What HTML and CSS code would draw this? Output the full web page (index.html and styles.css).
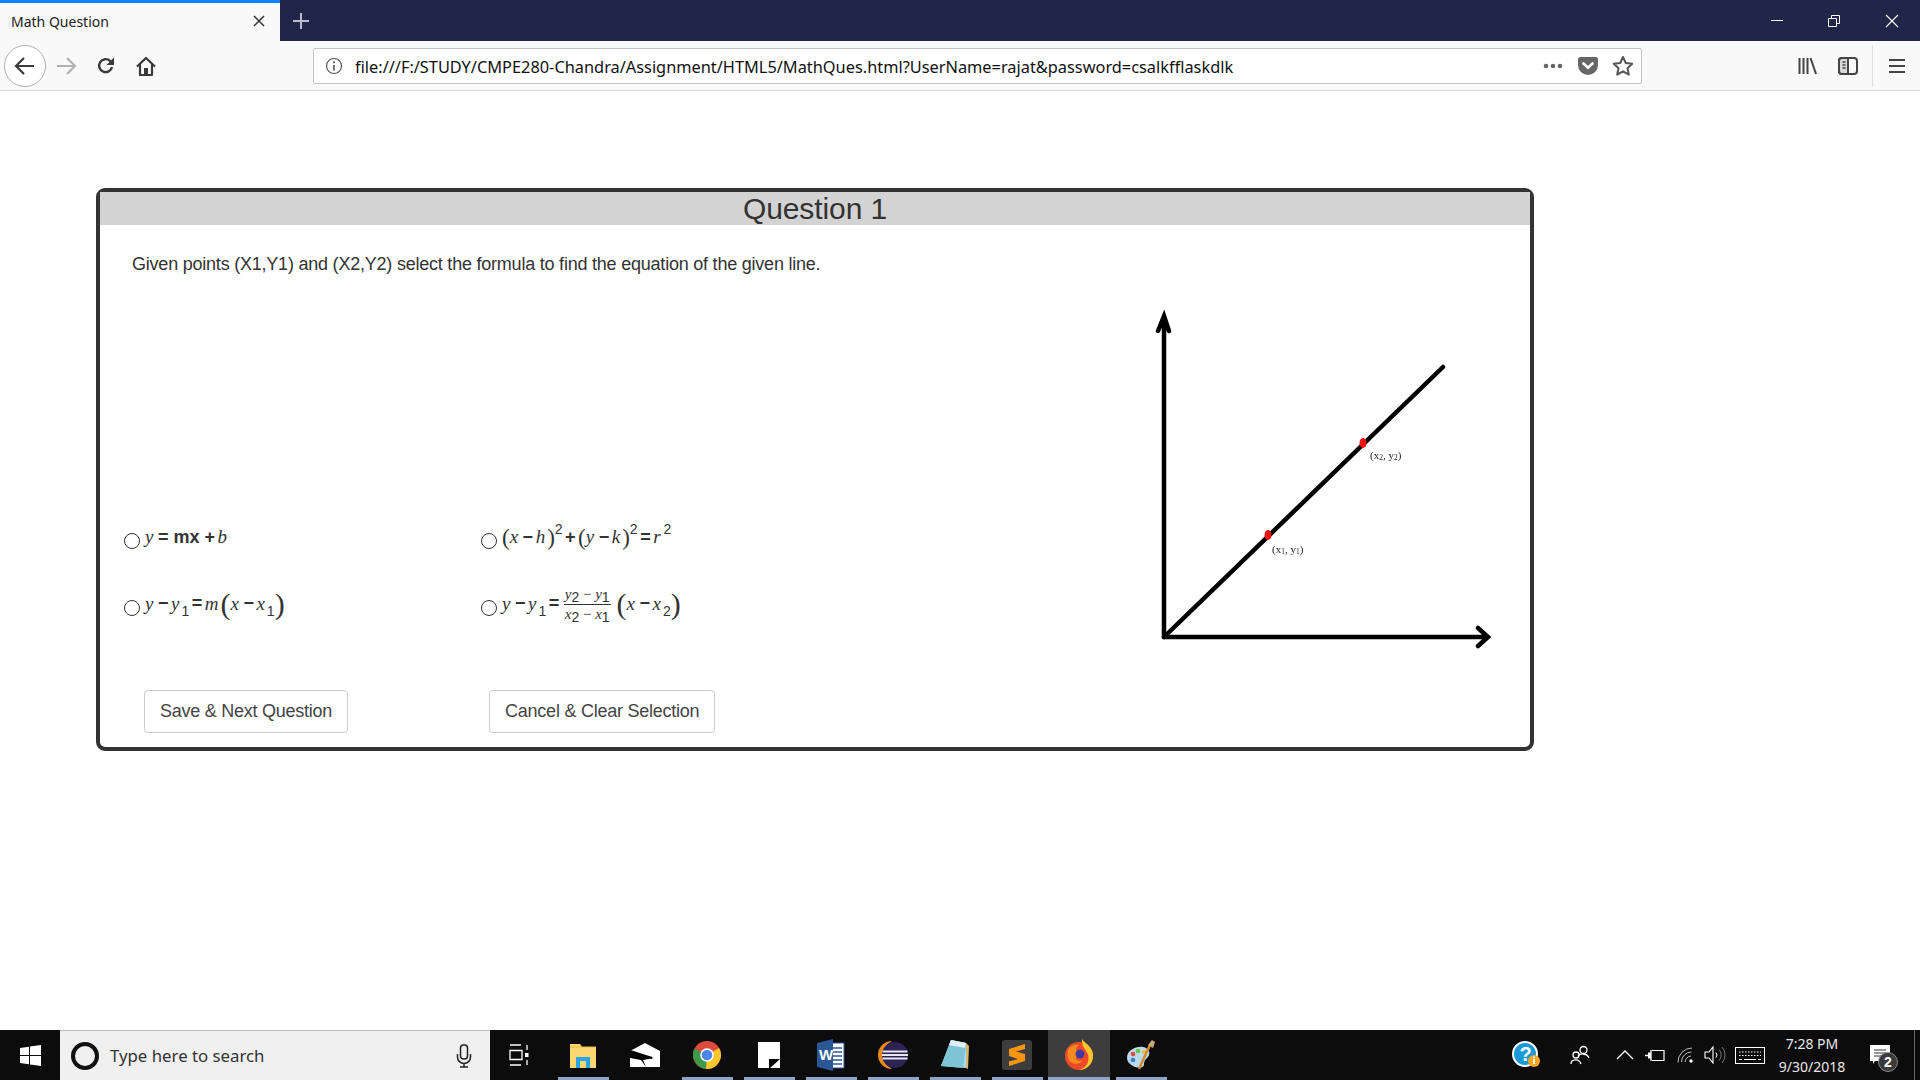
FILE: index.html
```html
<!DOCTYPE html>
<html>
<head>
  <title>Math Question</title>
  <link rel="stylesheet" href="styles.css">
</head>
<body>
  <!-- browser chrome -->
  <div class="tabbar">
    <div class="tab">
      <span class="tab-title">Math Question</span>
      <svg class="tab-close" width="14" height="14" viewBox="0 0 14 14"><path d="M2 2l10 10M12 2L2 12" stroke="#333" stroke-width="1.5"/></svg>
    </div>
    <svg class="new-tab" width="18" height="18" viewBox="0 0 18 18"><path d="M9 1v16M1 9h16" stroke="#b9bcc9" stroke-width="2"/></svg>
    <div class="win-btns">
      <svg class="win-btn" width="14" height="14" viewBox="0 0 14 14"><path d="M1 6.500h12" stroke="#fff"/></svg>
      <svg class="win-btn" width="14" height="14" viewBox="0 0 14 14"><path d="M1.500 4.500h8v8h-8zM4.500 4.500v-3h8v8h-3" fill="none" stroke="#fff"/></svg>
      <svg class="win-btn" width="16" height="16" viewBox="0 0 16 16"><path d="M2 2l12 12M14 2L2 14" stroke="#fff" stroke-width="1.100"/></svg>
    </div>
  </div>

  <div class="toolbar">
    <div class="back-btn">
      <svg width="22" height="20" viewBox="0 0 22 20"><path d="M20 10H3M10 2l-8 8 8 8" fill="none" stroke="#3a3a3a" stroke-width="2.200"/></svg>
    </div>
    <svg class="nav-icon forward" width="22" height="20" viewBox="0 0 22 20"><path d="M20 10H3M10 2l-8 8 8 8" transform="matrix(-1 0 0 1 22 0)" fill="none" stroke="#b1b1b1" stroke-width="2.200"/></svg>
    <svg class="nav-icon" width="20" height="20" viewBox="0 0 20 20"><path d="M16 11a6.500 6.500 0 1 1-2-6.200L16 7" fill="none" stroke="#3a3a3a" stroke-width="2.400"/><path d="M18 1.500V9h-7.500z" fill="#3a3a3a"/></svg>
    <svg class="nav-icon" width="22" height="22" viewBox="0 0 22 22"><path d="M2 11.500L11 3l9 8.500M5 9.500V20h12V9.500" fill="none" stroke="#3a3a3a" stroke-width="2.200" stroke-linejoin="round"/><rect x="9" y="13" width="4" height="7" fill="#3a3a3a"/></svg>

    <div class="urlbar">
      <svg class="info" width="18" height="18" viewBox="0 0 18 18"><circle cx="9" cy="9" r="7.500" fill="none" stroke="#555" stroke-width="1.200"/><path d="M9 8v5.500" stroke="#555" stroke-width="1.600"/><circle cx="9" cy="5.300" r="1.100" fill="#555"/></svg>
      <span class="url">file:///F:/STUDY/CMPE280-Chandra/Assignment/HTML5/MathQues.html?UserName=rajat&amp;password=csalkfflaskdlk</span>
      <svg class="url-icon dots" width="20" height="6" viewBox="0 0 20 6"><circle cx="3" cy="3" r="2.300" fill="#666"/><circle cx="10" cy="3" r="2.300" fill="#666"/><circle cx="17" cy="3" r="2.300" fill="#666"/></svg>
      <svg class="url-icon pocket" width="20" height="18" viewBox="0 0 20 18"><path d="M2.500 0h15A2.500 2.500 0 0 1 20 2.500V8A10 10 0 0 1 0 8V2.500A2.500 2.500 0 0 1 2.500 0z" fill="#666"/><path d="M5.500 6.500L10 10.800l4.500-4.300" fill="none" stroke="#fff" stroke-width="2.600" stroke-linecap="round"/></svg>
      <svg class="url-icon star" width="22" height="21" viewBox="0 0 22 21"><path d="M11 2l2.800 6 6.400.8-4.700 4.400 1.300 6.400L11 16.400l-5.800 3.200 1.300-6.400L1.800 8.800 8.200 8z" fill="none" stroke="#555" stroke-width="2" stroke-linejoin="round"/></svg>
    </div>

    <div class="tools">
      <svg class="tool" width="20" height="18" viewBox="0 0 20 18"><path d="M1.500 1v16M5.500 1v16M9.500 1v16M12.500 1l5.500 16" stroke="#444" stroke-width="2"/></svg>
      <svg class="tool" width="20" height="18" viewBox="0 0 20 18"><rect x="1" y="1" width="18" height="16" rx="3" fill="none" stroke="#444" stroke-width="2"/><path d="M10 1h-6a3 3 0 0 0-3 3v10a3 3 0 0 0 3 3h6z" fill="#d8d8d8" stroke="#444" stroke-width="2"/><path d="M4.500 5h3M4.500 8h3M4.500 11h3" stroke="#444" stroke-width="1.300"/></svg>
      <div class="tool-sep"></div>
      <svg class="tool" width="16" height="16" viewBox="0 0 16 16"><path d="M0 2h16M0 8h16M0 14h16" stroke="#444" stroke-width="2"/></svg>
    </div>
  </div>

  <!-- page -->
  <div class="page">
    <form class="card" onsubmit="return false">
      <h2 class="card-title">Question 1</h2>
      <div class="card-body">
        <div class="card-left">
          <p class="prompt">Given points (X1,Y1) and (X2,Y2) select the formula to find the equation of the given line.</p>

          <div class="options">
            <label class="option">
              <input type="radio" name="formula" class="radio">
              <span class="math"><i>y</i> <b>=</b> <b>mx</b> <b>+</b> <i>b</i></span>
            </label>
            <label class="option">
              <input type="radio" name="formula" class="radio">
              <span class="math"><span class="par">(</span><i>x</i> <b>&minus;</b> <i>h</i><span class="par">)</span><sup>2</sup> <b>+</b> <span class="par">(</span><i>y</i> <b>&minus;</b> <i>k</i><span class="par">)</span><sup>2</sup> <b>=</b> <i>r</i><sup class="sup-r">2</sup></span>
            </label>
            <label class="option">
              <input type="radio" name="formula" class="radio">
              <span class="math math-tall"><i>y</i> <b>&minus;</b> <i>y</i><sub>1</sub> <b>=</b> <i>m</i><span class="big">(</span><i>x</i> <b>&minus;</b> <i>x</i><sub>1</sub><span class="big">)</span></span>
            </label>
            <label class="option">
              <input type="radio" name="formula" class="radio">
              <span class="math math-tall"><i>y</i> <b>&minus;</b> <i>y</i><sub>1</sub> <b>=</b>
                <span class="frac">
                  <span class="frac-top"><i>y</i><sub>2</sub> &minus; <i>y</i><sub>1</sub></span>
                  <span class="frac-bot"><i>x</i><sub>2</sub> &minus; <i>x</i><sub>1</sub></span>
                </span>
                <span class="big big-gap">(</span><i>x</i> <b>&minus;</b> <i>x</i><sub>2</sub><span class="big">)</span></span>
            </label>
          </div>

          <div class="actions">
            <button type="button" class="btn">Save &amp; Next Question</button>
            <button type="button" class="btn">Cancel &amp; Clear Selection</button>
          </div>
        </div>

        <svg class="graph" width="360" height="350" viewBox="1150 300 360 350">
          <g fill="none" stroke="#000" stroke-width="4.500" stroke-linecap="round">
            <path d="M1163 637V318M1157 331l6-15 5 15"/>
            <path d="M1163 637H1484M1477 628l10 9-10 9"/>
            <path d="M1163 637L1442 367"/>
          </g>
          <ellipse cx="1267" cy="535" rx="3.500" ry="5" fill="#f01010"/>
          <ellipse cx="1362" cy="443" rx="3.500" ry="5" fill="#f01010"/>
          <text x="1271" y="553" class="graph-label">(x<tspan class="graph-sub" dy="1">1</tspan><tspan dy="-1">, y</tspan><tspan class="graph-sub" dy="1">1</tspan><tspan dy="-1">)</tspan></text>
          <text x="1369" y="459" class="graph-label">(x<tspan class="graph-sub" dy="1">2</tspan><tspan dy="-1">, y</tspan><tspan class="graph-sub" dy="1">2</tspan><tspan dy="-1">)</tspan></text>
        </svg>
      </div>
    </form>
  </div>

  <!-- windows taskbar -->
  <div class="taskbar">
    <div class="start">
      <svg width="21" height="21" viewBox="0 0 21 21"><path d="M0 3l9-1.300V10H0zM10 1.500L21 0v10H10zM0 11h9v8.300L0 18zM10 11h11v10l-11-1.500z" fill="#fff"/></svg>
    </div>
    <div class="search">
      <span class="cortana"></span>
      <span class="search-text">Type here to search</span>
      <svg class="mic" width="16" height="24" viewBox="0 0 16 24"><rect x="4.500" y="1" width="7" height="14" rx="3" fill="none" stroke="#222" stroke-width="1.500"/><path d="M1.500 10v3a6.500 6.500 0 0 0 13 0v-3M8 19.500V23M4 23h8" fill="none" stroke="#222" stroke-width="1.500"/></svg>
    </div>
    <div class="taskview">
      <svg width="20" height="22" viewBox="0 0 20 22"><path d="M1 1h11M1 21h11M1 6.500h12v9H1zM18 1v5M18 16v5" fill="none" stroke="#fff" stroke-width="1.300"/><rect x="16" y="9" width="3.500" height="4" fill="#fff"/></svg>
    </div>

    <div class="apps">
      <div class="app running">
        <svg width="28" height="28" viewBox="0 0 28 28"><path d="M1 3h10l2 3h14v21H1z" fill="#fbd774"/><path d="M1 6h26" stroke="#e8b93f"/><path d="M7 27v-11h14v11h-4v-7h-6v7z" fill="#2ba3e4"/></svg>
      </div>
      <div class="app">
        <svg width="32" height="24" viewBox="0 0 32 24"><path d="M1 8L16 0l15 8v16H1z" fill="#fff"/><path d="M1 8l24 7-11 2 3 7-5-7-11-2z" fill="#000"/><path d="M1 8l22 7" stroke="#000" stroke-width="2"/></svg>
      </div>
      <div class="app running">
        <svg width="28" height="28" viewBox="0 0 28 28"><circle cx="14" cy="14" r="14" fill="#dd4b3e"/><path d="M14 14L2 21A14 14 0 0 0 14 28z" fill="#3c9b4a"/><path d="M2 21A14 14 0 0 1 1.500 7.500L14 14z" fill="#3c9b4a"/><path d="M14 14l12-7A14 14 0 0 1 13 28z" fill="#fbc52d"/><circle cx="14" cy="14" r="6.800" fill="#fff"/><circle cx="14" cy="14" r="5.300" fill="#4b87e8"/></svg>
      </div>
      <div class="app running">
        <svg width="24" height="28" viewBox="0 0 24 28"><path d="M1 1h22v18h-9v8H1z" fill="#fff"/><path d="M12 27l11-11v11z" fill="#fff"/><path d="M12 28l0-10 11 0z" fill="#000"/></svg>
      </div>
      <div class="app running">
        <svg width="28" height="32" viewBox="0 0 28 32"><path d="M13 4h14v25H13z" fill="#fff" stroke="#2b5797"/><path d="M15 9h10M15 13h10M15 17h10M15 21h10M15 25h10" stroke="#2b5797" stroke-width="1.600"/><path d="M0 4l16-4v32L0 28z" fill="#2b5797"/><text x="2" y="21" class="word-w">W</text></svg>
      </div>
      <div class="app running">
        <svg width="32" height="32" viewBox="0 0 32 32"><path d="M15 2A14 14 0 0 0 15 30A16 16 0 0 1 15 2z" fill="#e88a1a"/><circle cx="18" cy="16" r="13" fill="#2c2254"/><path d="M5.500 12.500h25M5 16h26M5.500 19.500h25" stroke="#e6e6f0" stroke-width="2"/></svg>
      </div>
      <div class="app running">
        <svg width="30" height="32" viewBox="0 0 30 32"><path d="M11 1l15 3v25L1 27z" fill="#a9d8e6"/><path d="M26 4l3 3-1 23-2-1z" fill="#d3b772"/><path d="M11 1l15 3-3 25L1 27z" fill="#7ec3d6"/><path d="M11 1l15 3-1 5L9 6z" fill="#dfeff4"/></svg>
      </div>
      <div class="app running">
        <svg width="30" height="30" viewBox="0 0 30 30"><rect width="30" height="30" rx="3" fill="#3d3d3d"/><path d="M23 4L7 9v7l9 3-9 2.500V26l16-5v-7l-9-2.500L23 9z" fill="#f7960e"/></svg>
      </div>
      <div class="app running active">
        <svg width="28" height="32" viewBox="0 0 28 32"><circle cx="14" cy="17" r="14" fill="#ee4a2a"/><path d="M17 0c2 4 11 7 11 17a14 14 0 0 1-14 14c7-2 11-8 9-15-1-5-7-8-6-16z" fill="#fbc52d"/><path d="M4 9c3-3 7-4 10-3-2 2-3 3-3 5l5 2c-2 3-5 3-5 6s4 4 7 2c-3 5-11 5-14 0-2-4-2-9 0-12z" fill="#f58a1f"/><circle cx="15" cy="15" r="4.500" fill="#3d3a9e"/></svg>
      </div>
      <div class="app running">
        <svg width="30" height="32" viewBox="0 0 30 32"><path d="M1 19C1 11 10 7 17 8c6 1 8 6 5 10-3 3-4 4-4 8-1 4-8 3-11 1-4-2-6-5-6-8z" fill="#b8dbe8"/><circle cx="7" cy="15" r="2.300" fill="#e24a3b"/><circle cx="12" cy="12" r="2.300" fill="#6fbf4a"/><circle cx="18" cy="13" r="2" fill="#f2b632"/><circle cx="7" cy="21" r="2.300" fill="#3b7fd4"/><path d="M13 30L24 6" stroke="#d88a2e" stroke-width="2.500"/><path d="M22 6l4-5 3 2-2 6z" fill="#c8a878"/></svg>
      </div>
    </div>

    <div class="tray">
      <div class="tray-item t-help">
        <svg width="30" height="28" viewBox="0 0 30 28"><circle cx="13" cy="13" r="12" fill="#1b9ad8" stroke="#fff" stroke-width="2"/><text x="7.500" y="20" class="help-q">?</text><circle cx="22" cy="20" r="6" fill="#f5a623"/><path d="M22 18v5M22 15.500v1.500" stroke="#fff" stroke-width="2"/></svg>
      </div>
      <div class="tray-item t-people">
        <svg width="20" height="20" viewBox="0 0 20 20"><circle cx="13.500" cy="5" r="3.500" fill="none" stroke="#fff" stroke-width="1.300"/><path d="M8 11c2-3 9-3 11 2" fill="none" stroke="#fff" stroke-width="1.300"/><circle cx="6" cy="10" r="3" fill="none" stroke="#fff" stroke-width="1.300"/><path d="M1 19c0-5 8-6 10 0" fill="none" stroke="#fff" stroke-width="1.300"/></svg>
      </div>
      <div class="tray-item t-chev">
        <svg width="18" height="10" viewBox="0 0 18 10"><path d="M1 9l8-8 8 8" fill="none" stroke="#fff" stroke-width="1.300"/></svg>
      </div>
      <div class="tray-item t-batt">
        <svg width="20" height="13" viewBox="0 0 20 13"><path d="M7 1.500h12v10H7" fill="none" stroke="#fff" stroke-width="1.200"/><path d="M0 6.500h4M6 1v11" stroke="#fff" stroke-width="1.300"/><rect x="3" y="3.500" width="3" height="6" fill="#fff"/></svg>
      </div>
      <div class="tray-item t-wifi">
        <svg width="18" height="16" viewBox="0 0 18 16"><circle cx="14" cy="14" r="1.700" fill="#fff"/><g fill="none" stroke="#bbb" stroke-width="1"><path d="M8 15a6.500 6.500 0 0 1 6-6"/><path d="M4.500 15a10 10 0 0 1 10-10"/><path d="M1 15.500A14 14 0 0 1 15 1"/></g></svg>
      </div>
      <div class="tray-item t-vol">
        <svg width="22" height="18" viewBox="0 0 22 18"><path d="M1 6h4l4-5v16l-4-5H1z" fill="none" stroke="#fff" stroke-width="1.100"/><path d="M12 6.500a4 4 0 0 1 0 5" fill="none" stroke="#fff"/><path d="M15 3.500a8 8 0 0 1 0 11M18 1a12 12 0 0 1 0 16" fill="none" stroke="#777"/></svg>
      </div>
      <div class="tray-item t-kbd">
        <svg width="30" height="17" viewBox="0 0 30 17"><rect x=".5" y=".5" width="29" height="16" fill="none" stroke="#fff"/><path d="M4 5h22M4 8.500h22" stroke="#fff" stroke-dasharray="1.500 1.500"/><path d="M4 12.500h3M9 12.500h12M23 12.500h3" stroke="#fff"/></svg>
      </div>
      <div class="clock">
        <span>7:28 PM</span>
        <span>9/30/2018</span>
      </div>
      <div class="notif">
        <svg width="20" height="20" viewBox="0 0 20 20"><path d="M0 0h20v16H5l-2 3v-3H0z" fill="#fff"/><path d="M4 5h12M4 8h12M4 11h8" stroke="#333"/></svg>
        <span class="notif-badge">2</span>
      </div>
      <div class="show-desktop"></div>
    </div>
  </div>
</body>
</html>
```

FILE: styles.css
```css
* {
  box-sizing: border-box;
}

html, body {
  height: 100%;
}

body {
  margin: 0;
  display: flex;
  flex-direction: column;
  background-color: #fff;
  font-family: "Liberation Sans", Arial, sans-serif;
  color: #333;
  overflow: hidden;
}

/* tab strip */
.tabbar {
  height: 41px;
  flex: none;
  display: flex;
  align-items: center;
  background-color: #20264a;
}

.tab {
  width: 280px;
  height: 41px;
  display: flex;
  align-items: center;
  padding: 0 14px 2px 11px;
  background-color: #f9f9fa;
  border-top: 3px solid #0a84ff;
}

.tab-title {
  flex: 1;
  font-family: "Noto Sans", sans-serif;
  font-size: 14px;
  color: #222;
}

.new-tab {
  margin-left: 12px;
}

.win-btns {
  margin-left: auto;
  display: flex;
  align-items: center;
}

.win-btn {
  margin-left: 43px;
}

.win-btn:last-child {
  margin-right: 20px;
}

/* nav bar */
.toolbar {
  height: 50px;
  flex: none;
  display: flex;
  align-items: center;
  padding-left: 4px;
  background-color: #f9f9fa;
  border-bottom: 1px solid #dcdcdc;
}

.back-btn {
  width: 42px;
  height: 42px;
  flex: none;
  display: flex;
  align-items: center;
  justify-content: center;
  background-color: #fff;
  border: 1px solid #b1b1b1;
  border-radius: 50%;
}

.nav-icon {
  flex: none;
  margin-left: 19px;
}

.forward {
  margin-left: 9px;
}

.urlbar {
  width: 1329px;
  height: 36px;
  flex: none;
  margin-left: 156px;
  display: flex;
  align-items: center;
  background-color: #fff;
  border: 1px solid #c4c4c4;
  border-radius: 2px;
  padding-left: 11px;
}

.info {
  flex: none;
}

.url {
  margin-left: 12px;
  padding-top: 3px;
  font-family: "Noto Sans", sans-serif;
  font-size: 16.350px;
  color: #111;
  white-space: nowrap;
}

.url-icon {
  flex: none;
}

.dots {
  margin-left: auto;
}

.pocket {
  margin-left: 15px;
}

.star {
  margin-left: 14px;
  margin-right: 7px;
}

.tools {
  flex: 1;
  display: flex;
  align-items: center;
  padding-left: 156px;
}

.tool {
  flex: none;
  margin-right: 20px;
}

.tool:last-child {
  margin-right: 0;
}

.tool-sep {
  width: 1px;
  height: 42px;
  margin-right: 16px;
  margin-left: -6px;
  background-color: #ddd;
}

/* question card */
.page {
  flex: 1;
  padding: 97px 0 0 96px;
}

.card {
  width: 1438px;
  height: 563px;
  display: flex;
  flex-direction: column;
  background-color: #fff;
  border: 4px solid #333;
  border-radius: 9px;
}

.card-title {
  height: 33px;
  flex: none;
  margin: 0;
  background-color: #d3d3d3;
  font-size: 30px;
  font-weight: normal;
  line-height: 34px;
  text-align: center;
  color: #333;
  letter-spacing: -0.1px;
}

.card-body {
  flex: 1;
  display: flex;
}

.card-left {
  flex: 1;
  padding-left: 24px;
}

.prompt {
  margin: 29px 0 0 8px;
  font-size: 18px;
  line-height: 20px;
  letter-spacing: -0.22px;
}

.options {
  display: grid;
  grid-template-columns: 357px 1fr;
  grid-auto-rows: 67px;
  margin-top: 233px;
}

.option {
  display: flex;
  align-items: center;
}

.radio {
  appearance: none;
  width: 16px;
  height: 16px;
  margin: 0 5px 0 0;
  flex: none;
  background-color: #fff;
  border: 1px solid #333;
  border-radius: 50%;
}

.math {
  margin-bottom: 7px;
  font-family: "Liberation Serif", serif;
  font-size: 19px;
  color: #333;
  white-space: nowrap;
  display: inline-flex;
  align-items: center;
}

.math-tall {
  margin-bottom: 8px;
}

.math i {
  padding-right: 2px;
}

.math b {
  font-family: "Liberation Sans", sans-serif;
  font-size: 18px;
  margin: 0 2.500px;
}

.math sub, .math sup {
  font-family: "Liberation Sans", sans-serif;
  font-size: 14px;
  line-height: 0;
  position: relative;
  vertical-align: baseline;
}

.math sub {
  top: 7px;
}

.math sup {
  top: -8px;
}

.sup-r {
  margin-left: 1px;
}

.par {
  font-size: 23px;
  line-height: 1;
}

.big {
  font-size: 30px;
  line-height: 1;
}

.big-gap {
  margin-left: 6px;
}

.frac {
  display: inline-flex;
  flex-direction: column;
  align-items: center;
  margin: 0 0 0 2px;
  font-size: 15px;
  line-height: 18px;
}

.frac-top {
  border-bottom: 1px solid #333;
  padding: 0 1px 1px;
}

.frac i {
  padding-right: 0;
}

.frac sub {
  font-size: 14px;
  top: 3px;
}

.actions {
  display: flex;
  gap: 141px;
  margin-top: 49px;
  margin-left: 20px;
}

.btn {
  height: 43px;
  padding: 0 15px;
  font-family: "Liberation Sans", sans-serif;
  font-size: 18px;
  letter-spacing: -0.25px;
  color: #444;
  background-color: #fff;
  border: 1px solid #ccc;
  border-radius: 4px;
}

.graph {
  flex: none;
  margin: 75px 19px 0 0;
  filter: blur(0.4px);
}

.graph-label {
  font-family: "Liberation Serif", serif;
  font-size: 11px;
  fill: #222;
}

.graph-sub {
  font-size: 7.500px;
}

/* taskbar */
.taskbar {
  height: 50px;
  flex: none;
  display: flex;
  align-items: stretch;
  background-color: #0c0c0c;
}

.start {
  width: 60px;
  display: flex;
  align-items: center;
  justify-content: center;
}

.search {
  width: 430px;
  display: flex;
  align-items: center;
  padding-left: 11px;
  background-color: #f0f0f0;
  border-top: 1px solid #bbb;
}

.cortana {
  width: 28px;
  height: 28px;
  border: 4px solid #111;
  border-radius: 50%;
  background-color: #f0f0f0;
}

.search-text {
  margin-left: 11px;
  font-family: "Noto Sans", sans-serif;
  font-size: 16.800px;
  color: #333;
}

.mic {
  margin-left: auto;
  margin-right: 18px;
}

.taskview {
  width: 58px;
  display: flex;
  align-items: center;
  justify-content: center;
}

.apps {
  display: flex;
  margin-left: 4px;
}

.app {
  width: 62px;
  display: flex;
  align-items: center;
  justify-content: center;
  position: relative;
}

/* blue bar under running apps */
.app.running::after {
  content: "";
  position: absolute;
  left: 6px;
  right: 5px;
  bottom: 0;
  height: 3px;
  background-color: #8fa3c4;
}

.app.active {
  background-color: #3d3d3d;
}

.app.active::after {
  left: 0;
  right: 0;
}

.word-w {
  font-family: "Liberation Sans", sans-serif;
  font-size: 15px;
  font-weight: bold;
  fill: #fff;
}

.tray {
  margin-left: auto;
  display: flex;
  align-items: center;
  color: #fff;
}

.tray-item {
  display: flex;
  align-items: center;
  justify-content: center;
}

.t-help { width: 50px; padding-left: 4px; }
.t-people { width: 60px; }
.t-chev { width: 30px; }
.t-batt { width: 30px; }
.t-wifi { width: 31px; }
.t-vol { width: 28px; }
.t-kbd { width: 42px; }

.help-q {
  font-family: "Liberation Sans", sans-serif;
  font-size: 20px;
  font-weight: bold;
  fill: #fff;
}

.clock {
  width: 82px;
  display: flex;
  flex-direction: column;
  align-items: center;
  gap: 5px;
  font-family: "Noto Sans", sans-serif;
  font-size: 14px;
  line-height: 18px;
  color: #e8e8e8;
}

.notif {
  width: 61px;
  display: flex;
  align-items: center;
  justify-content: center;
  position: relative;
  padding-right: 8px;
}

.notif-badge {
  position: absolute;
  left: 25px;
  top: 7px;
  width: 20px;
  height: 20px;
  border-radius: 50%;
  background-color: #3a3a3a;
  border: 1px solid #888;
  font-size: 14px;
  font-weight: bold;
  line-height: 18px;
  text-align: center;
  color: #fff;
}

.show-desktop {
  width: 6px;
  height: 50px;
  border-left: 1px solid #666;
}
```
